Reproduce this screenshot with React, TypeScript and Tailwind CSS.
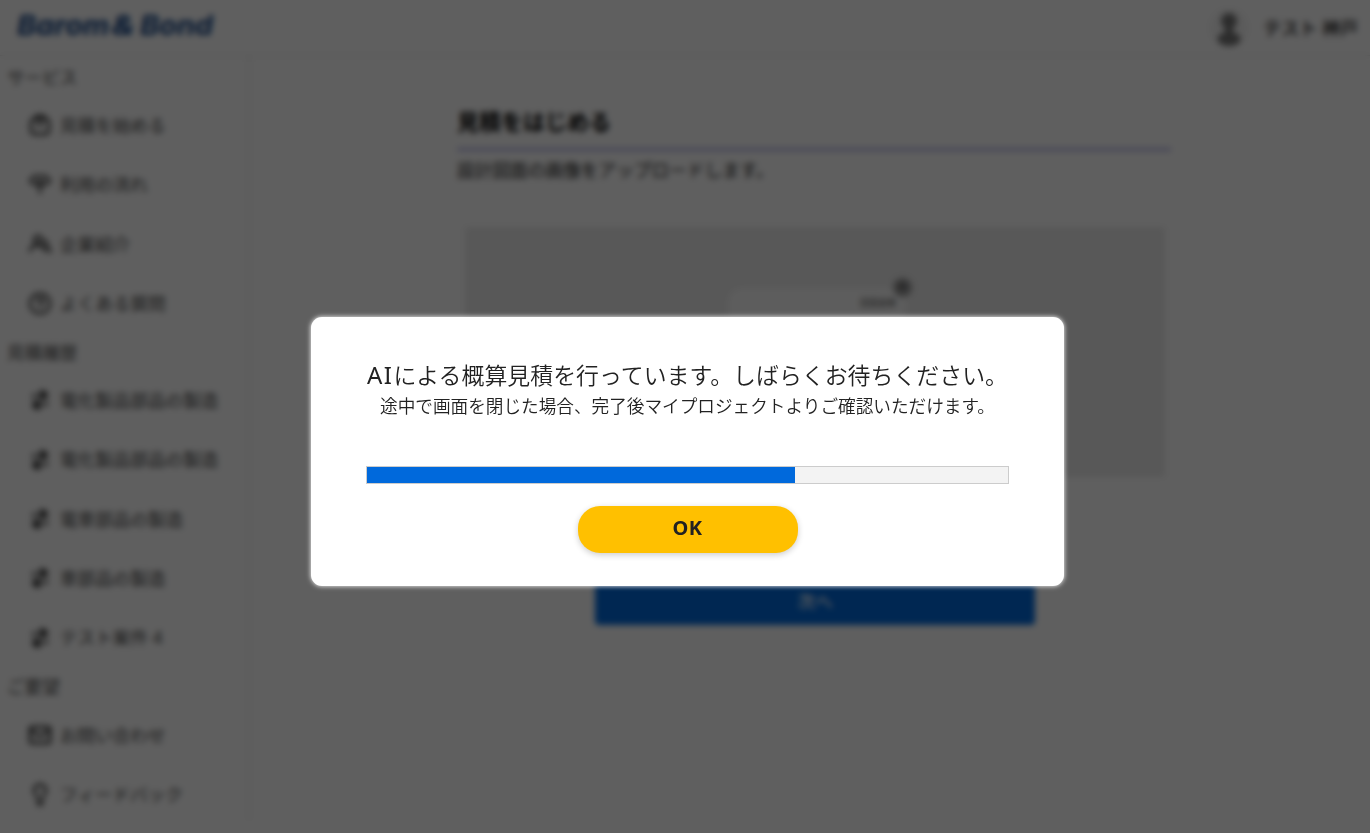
import React from 'react';
import { CircleHelp, Lightbulb, Mail } from 'lucide-react';

type IconName = 'bag' | 'flow' | 'users' | 'help' | 'swap' | 'mail' | 'bulb';

interface MenuItem {
  label: string;
  icon: IconName;
}

interface MenuSection {
  title: string;
  items: MenuItem[];
}

const sections: MenuSection[] = [
  {
    title: 'サービス',
    items: [
      { label: '見積を始める', icon: 'bag' },
      { label: '利用の流れ', icon: 'flow' },
      { label: '企業紹介', icon: 'users' },
      { label: 'よくある質問', icon: 'help' },
    ],
  },
  {
    title: '見積履歴',
    items: [
      { label: '電化製品部品の製造', icon: 'swap' },
      { label: '電化製品部品の製造', icon: 'swap' },
      { label: '電車部品の製造', icon: 'swap' },
      { label: '車部品の製造', icon: 'swap' },
      { label: 'テスト案件 4', icon: 'swap' },
    ],
  },
  {
    title: 'ご要望',
    items: [
      { label: 'お問い合わせ', icon: 'mail' },
      { label: 'フィードバック', icon: 'bulb' },
    ],
  },
];

const MenuIcon: React.FC<{ name: IconName }> = ({ name }) => {
  switch (name) {
    case 'bag':
      return (
        <svg width="24" height="24" viewBox="0 0 24 24" fill="none" stroke="currentColor" strokeWidth="2.8">
          <rect x="3" y="6" width="18" height="15" rx="3" />
          <path d="M8 6V3h8v3M9 10c1 2 5 2 6 0" />
        </svg>
      );
    case 'flow':
      return (
        <svg width="24" height="24" viewBox="0 0 24 24" fill="none" stroke="currentColor" strokeWidth="2.6">
          <path d="M6 4h12l4 5-5 4H7L2 9zM8 9h8M12 9v13" />
        </svg>
      );
    case 'users':
      return (
        <svg width="24" height="24" viewBox="0 0 24 24" fill="none" stroke="currentColor" strokeWidth="2.8">
          <circle cx="10" cy="8" r="4" />
          <path d="M1.500 20c1-4 4-7 8-7s7 3 8 7M16 9c3 0 4 3 2 5M18 14c3 1 4 4 4.500 7" />
        </svg>
      );
    case 'help':
      return <CircleHelp size={25} strokeWidth={2.6} />;
    case 'swap':
      return (
        <svg width="20" height="20" viewBox="0 0 20 20" fill="none" stroke="currentColor" strokeWidth="1.8">
          <path d="M3 9V5h10M17 11v4H7" />
          <path d="M10 0h4l5 5-5 5h-4zM10 10H6l-5 5 5 5h4z" fill="currentColor" stroke="none" />
        </svg>
      );
    case 'mail':
      return <Mail size={26} strokeWidth={3} />;
    case 'bulb':
      return <Lightbulb size={25} strokeWidth={2.8} />;
  }
};

const Header: React.FC = () => (
  <header className="flex h-14 shrink-0 items-center justify-between border-b border-[#e2e2e2] pl-[17px] pr-3">
    <svg width="200" height="30" viewBox="0 0 200 30" className="mb-1.5" aria-label="Barom & Bond">
      <g className="fill-[#134486] font-['Inter',sans-serif] text-[27px] font-bold italic">
        <text x="0" y="24.500" textLength="92" lengthAdjust="spacingAndGlyphs">
          Barom
        </text>
        <text x="94" y="24.500" textLength="24" lengthAdjust="spacingAndGlyphs">
          &amp;
        </text>
        <text x="123" y="24.500" textLength="73" lengthAdjust="spacingAndGlyphs">
          Bond
        </text>
      </g>
    </svg>
    <div className="flex items-center">
      <div className="flex size-10 items-center justify-center rounded-full bg-[#f5f5f5]">
        <svg width="28" height="36" viewBox="0 0 28 36" className="mt-1 fill-[#777]">
          <circle cx="14" cy="9" r="8" />
          <path d="M10 15h8v6h-8z" />
          <ellipse cx="14" cy="27" rx="11.500" ry="7" />
        </svg>
      </div>
      <span className="ml-3.5 whitespace-pre pt-0.5 text-[18px] font-medium text-[#222]">テスト 神戸</span>
    </div>
  </header>
);

const Sidebar: React.FC = () => (
  <nav className="h-[764px] w-[250px] shrink-0 border-r-2 border-[#ececec] text-[#444]">
    {sections.map((section) => (
      <div key={section.title}>
        <h2 className="flex h-[38px] items-center pl-[7px] pt-1">{section.title}</h2>
        {section.items.map((item, i) => (
          <div key={i} className="flex h-[59.300px] items-center pl-7 pt-[3px]">
            <span className="mr-2 flex w-6 shrink-0 items-center justify-center">
              <MenuIcon name={item.icon} />
            </span>
            <span className="whitespace-nowrap">{item.label}</span>
          </div>
        ))}
      </div>
    ))}
  </nav>
);

const UploadPage: React.FC = () => (
  <main className="flex-1 pl-[207px] pt-[46px]">
    <div className="w-[714px]">
      <h1 className="h-[49px] border-b-[3px] border-[#b0b0e4] pt-[3px] text-[22px] font-bold leading-[32px] text-black">
        見積をはじめる
      </h1>
      <p className="mt-1 text-[17.700px] leading-[30px] text-[#222]">設計図面の画像をアップロードします。</p>
      <div className="ml-2 mr-1.5 mt-[42px] flex h-[250px] justify-center bg-[#ebebeb] pt-[59px]">
        <div className="relative ml-1 h-[130px] w-[182px] rounded-2xl border-4 border-[#f2f2f2] bg-[#fafafa]">
          <span className="absolute -right-2 -top-3 size-[19px] rounded-full bg-[#999] text-center text-xs leading-[18px] text-black">
            ×
          </span>
          <p className="pr-2 pt-[5px] text-right text-[9px] leading-4 text-[#555]">図面画像</p>
        </div>
      </div>
      <button className="ml-[138px] mt-[100px] block h-12 w-[440px] rounded bg-[#0069dc] font-medium text-white">次へ</button>
    </div>
  </main>
);

const ProgressDialog: React.FC<{ progress: number }> = ({ progress }) => (
  <div
    role="dialog"
    className="mb-[-69px] ml-[5px] flex h-[269px] w-[753px] flex-col items-center rounded-[11px] bg-white px-[55px] pt-[42px] text-[#222] shadow-[0_0_5px_#fff]"
  >
    <p className="h-[34px] whitespace-nowrap text-[22.880px] font-[350] leading-[34px] tracking-[0.040px]">
      <span className="font-['Noto_Sans'] text-[24px] font-normal leading-none tracking-[1.500px]">AI</span>
      による概算見積を行っています。しばらくお待ちください。
    </p>
    <p className="whitespace-nowrap text-[17.640px] font-[350] leading-[26px]">
      途中で画面を閉じた場合、完了後マイプロジェクトよりご確認いただけます。
    </p>
    <div className="mt-[47px] h-[18px] w-full shrink-0 border border-[#ccc] bg-[#f3f3f3]">
      <div className="h-full bg-[#0069dc]" style={{ width: `${progress}%` }} />
    </div>
    <button className="mt-[22px] h-[47px] w-[220px] shrink-0 rounded-[22px] bg-[#ffc000] pb-0.5 text-[20px] font-bold tracking-[0.500px] text-[#222] shadow-[0_2px_6px_rgba(0,0,0,0.2)]">
      OK
    </button>
  </div>
);

const App: React.FC = () => (
  <div className="relative h-[833px] w-[1370px] overflow-hidden bg-white font-['Noto_Sans','Noto_Sans_CJK_JP',sans-serif] text-[17.600px]">
    <div className="flex h-full flex-col">
      <Header />
      <div className="flex min-h-0 flex-1">
        <Sidebar />
        <UploadPage />
      </div>
    </div>
    {/* Dimmed backdrop behind the dialog */}
    <div className="absolute inset-0 flex items-center justify-center bg-black/[0.627] backdrop-blur-[3.300px]">
      <ProgressDialog progress={66.8} />
    </div>
  </div>
);

export default App;
